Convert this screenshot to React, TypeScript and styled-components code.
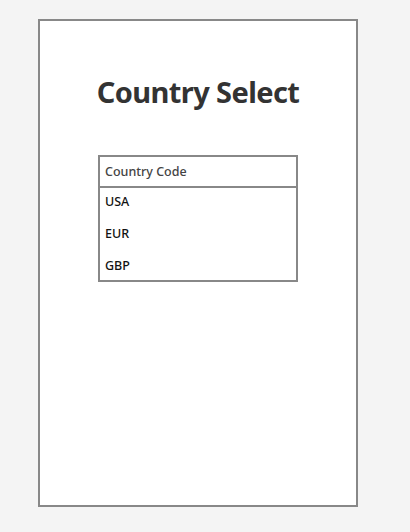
import styled, { createGlobalStyle } from 'styled-components';

const GlobalStyle = createGlobalStyle`
  body {
    margin: 0;
    background: #f4f4f4;
    font-family: "Noto Sans", "Open Sans", sans-serif;
  }
`;

const Page = styled.div`
  padding: 19px 0 0 38px;
`;

const Card = styled.div`
  box-sizing: border-box;
  width: 320px;
  height: 488px;
  border: 2px solid #888;
  background: #fff;
  display: flex;
  flex-direction: column;
  align-items: center;
  padding-top: 51px;
`;

const Title = styled.h1`
  margin: 0 0 43px;
  font-size: 29px;
  line-height: 40px;
  font-weight: 700;
  color: #333;
  letter-spacing: -0.6px;
`;

const List = styled.div`
  box-sizing: border-box;
  width: 200px;
  border: 2px solid #888;
  display: flex;
  flex-direction: column;
  gap: 6px;
  padding-bottom: 2px;
`;

const Header = styled.div`
  box-sizing: border-box;
  height: 31px;
  border-bottom: 2px solid #888;
  display: flex;
  align-items: center;
  padding-left: 5px;
  font-size: 12.5px;
  color: #444;
  font-weight: 500;
  margin-bottom: -6px;
`;

const Option = styled.div`
  height: 26px;
  display: flex;
  align-items: center;
  padding-left: 5px;
  font-size: 12.5px;
  color: #111;
  font-weight: 500;
`;

const codes = ['USA', 'EUR', 'GBP'];

export default function App() {
  return (
    <>
      <GlobalStyle />
      <Page>
        <Card>
          <Title>Country Select</Title>
          <List>
            <Header>Country Code</Header>
            {codes.map((code) => (
              <Option key={code}>{code}</Option>
            ))}
          </List>
        </Card>
      </Page>
    </>
  );
}
